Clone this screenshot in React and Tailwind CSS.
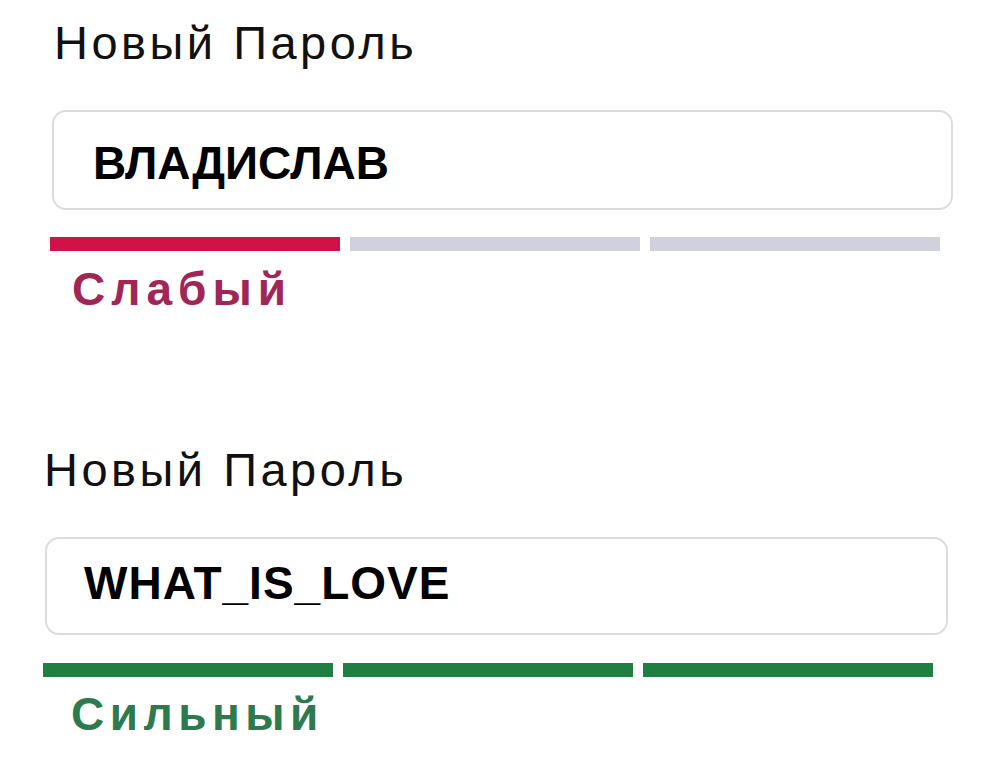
const fields = [
  {
    value: 'ВЛАДИСЛАВ',
    level: 1,
    verdict: 'Слабый',
    on: 'bg-[#cf1247]',
    text: 'text-[#9f2656] tracking-[6px]',
    wrap: 'ml-[50px] pt-[19px]',
    label: 'ml-[4px]',
    input: 'mt-[44px] ml-[2px] h-[100px] w-[901px] pl-[39px] pt-[5px]',
    bars: 'mt-[27px] w-[890px]',
    verdictBox: 'mt-[15px] ml-[22px]',
  },
  {
    value: 'WHAT_IS_LOVE',
    level: 3,
    verdict: 'Сильный',
    on: 'bg-[#1f7f42]',
    text: 'text-[#2d7a4e] tracking-[5.5px]',
    wrap: 'ml-[43px] mt-[134px]',
    label: 'ml-[1px]',
    input: 'mt-[44px] ml-[2px] h-[98px] w-[903px] pl-[37px] pb-[6px] tracking-[1px]',
    bars: 'mt-[28px] w-[890px]',
    verdictBox: 'mt-[14px] ml-[28px]',
  },
];

function StrengthBars({ level, on, className }) {
  return (
    <div className={`flex gap-[10px] ${className}`}>
      {[0, 1, 2].map((i) => (
        <div key={i} className={`h-[14px] flex-1 ${i < level ? on : 'bg-[#d0d1dd]'}`} />
      ))}
    </div>
  );
}

function PasswordField({ field }) {
  return (
    <div className={field.wrap}>
      <div className={`text-[47px] leading-none tracking-[3.5px] text-[#111] ${field.label}`}>Новый Пароль</div>
      <div
        className={`flex items-center rounded-[14px] border-2 border-[#dcdcdc] bg-white text-[46px] font-bold leading-none text-black ${field.input}`}
      >
        {field.value}
      </div>
      <StrengthBars level={field.level} on={field.on} className={field.bars} />
      <div className={`text-[46px] font-bold leading-none ${field.text} ${field.verdictBox}`}>{field.verdict}</div>
    </div>
  );
}

export default function App() {
  return (
    <div className="h-[760px] w-[1000px] overflow-hidden bg-white font-['Liberation_Sans',Arial,sans-serif]">
      {fields.map((f) => (
        <PasswordField key={f.value} field={f} />
      ))}
    </div>
  );
}
